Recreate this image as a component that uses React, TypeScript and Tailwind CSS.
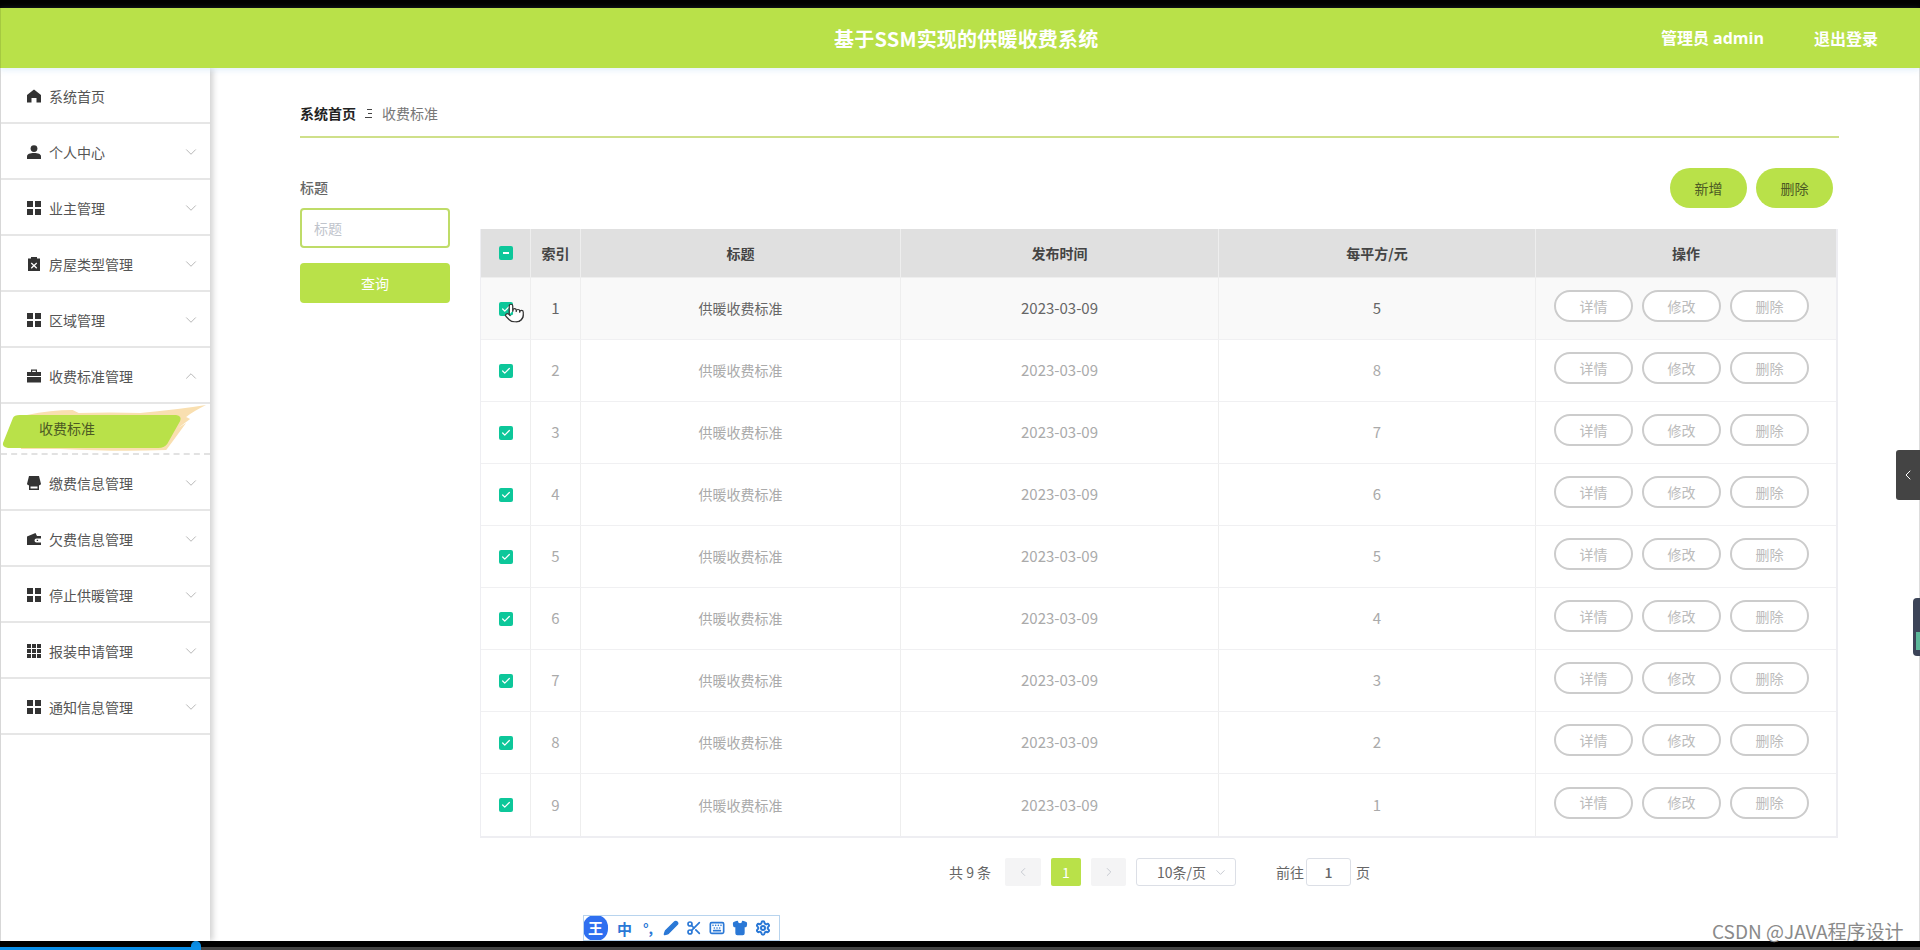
import { ChevronDown, ChevronUp, ChevronLeft, ChevronRight, Check, Pointer, Pen, Scissors, Keyboard, Shirt, Settings } from 'lucide-react'

type IconName = 'home' | 'user' | 'grid' | 'clip' | 'case' | 'store' | 'wallet' | 'grid9'

const MenuIcon = ({ name }: { name: IconName }) => {
  const cls = 'w-[14px] h-[14px] fill-[#333333] shrink-0'
  if (name === 'home') return <svg viewBox="0 0 14 14" className={cls}><path d="M7 0.5 14 6v7.5H9.5V9h-5v4.5H0V6z" /></svg>
  if (name === 'user') return <svg viewBox="0 0 14 14" className={cls}><circle cx="7" cy="3.6" r="3.4" /><path d="M0 14v-2.6C0 9.2 3 8 7 8s7 1.2 7 3.4V14z" /></svg>
  if (name === 'grid') return <svg viewBox="0 0 14 14" className={cls}><path d="M0 0h6v6H0zM8 0h6v6H8zM0 8h6v6H0zM8 8h6v6H8z" /></svg>
  if (name === 'clip') return <svg viewBox="0 0 14 14" className={cls}><path fillRule="evenodd" d="M1 1.500h3V0h6v1.500h3V14H1zM4.700 5.500 3.800 6.400 6 8.600l-2.200 2.200.9.900L7 9.500l2.300 2.200.9-.9L8 8.600l2.200-2.200-.9-.9L7 7.700z" /></svg>
  if (name === 'case') return <svg viewBox="0 0 14 14" className={cls}><path fillRule="evenodd" d="M4 3V0.500h6V3h4v4H0V3zM5.200 1.700V3h3.600V1.700zM0 8h14v5.500H0z" /></svg>
  if (name === 'store') return <svg viewBox="0 0 14 14" className={cls}><path fillRule="evenodd" d="M2 0h10l2 8q-1 1.500-2 1.200V14H2V9.200Q1 9.500 0 8zM3.500 10.500V12.500h7v-2z" /></svg>
  if (name === 'wallet') return <svg viewBox="0 0 14 14" className={cls}><path fillRule="evenodd" d="M0 4.500 8.500 1 10 4h4v2.500H9.500a2 2 0 0 0 0 4H14V13H0zM9.700 7.700h1.400v1.400H9.700z" /></svg>
  return <svg viewBox="0 0 14 14" className={cls}><path d="M0 0h4v4H0zM5 0h4v4H5zM10 0h4v4h-4zM0 5h4v4H0zM5 5h4v4H5zM10 5h4v4h-4zM0 10h4v4H0zM5 10h4v4H5zM10 10h4v4h-4z" /></svg>
}

const menus: { name: string; icon: IconName; arrow?: 'down' | 'up' }[] = [
  { name: '系统首页', icon: 'home' },
  { name: '个人中心', icon: 'user', arrow: 'down' },
  { name: '业主管理', icon: 'grid', arrow: 'down' },
  { name: '房屋类型管理', icon: 'clip', arrow: 'down' },
  { name: '区域管理', icon: 'grid', arrow: 'down' },
  { name: '收费标准管理', icon: 'case', arrow: 'up' },
]

const menusAfter: { name: string; icon: IconName; arrow?: 'down' | 'up' }[] = [
  { name: '缴费信息管理', icon: 'store', arrow: 'down' },
  { name: '欠费信息管理', icon: 'wallet', arrow: 'down' },
  { name: '停止供暖管理', icon: 'grid', arrow: 'down' },
  { name: '报装申请管理', icon: 'grid9', arrow: 'down' },
  { name: '通知信息管理', icon: 'grid', arrow: 'down' },
]

const rows = [
  { id: 1, price: 5 },
  { id: 2, price: 8 },
  { id: 3, price: 7 },
  { id: 4, price: 6 },
  { id: 5, price: 5 },
  { id: 6, price: 4 },
  { id: 7, price: 3 },
  { id: 8, price: 2 },
  { id: 9, price: 1 },
]

const MenuRow = ({ name, icon, arrow }: { name: string; icon: IconName; arrow?: 'down' | 'up' }) => (
  <div className="h-[56px] flex items-center pt-[2px] pl-[26px] pr-[10px] border-b-2 border-[#e6e6e6] text-[14px] text-[#555555]">
    <MenuIcon name={icon} />
    <span className="ml-[8px] flex-1">{name}</span>
    {arrow === 'down' && <ChevronDown className="w-[18px] h-[18px] text-[#b0b0b0]" strokeWidth={1.2} />}
    {arrow === 'up' && <ChevronUp className="w-[18px] h-[18px] text-[#b0b0b0]" strokeWidth={1.2} />}
  </div>
)

const OpButton = ({ label }: { label: string }) => (
  <button className="w-[79px] h-[32px] rounded-full border-2 border-[#cccccc] bg-white text-[14px] text-[#bbbbbb] flex items-center justify-center">
    {label}
  </button>
)

export default function App() {
  return (
    <div className="relative w-[1920px] h-[950px] overflow-hidden bg-white flex flex-col font-['Noto_Sans_CJK_SC','Noto_Sans',sans-serif]">
      <div className="h-[8px] bg-black shrink-0" />

      <header className="h-[60px] shrink-0 bg-[#b9e149] border-l border-[#a5c940] relative flex items-center justify-end pr-[42px] text-white font-bold shadow-[0_2px_6px_rgba(170,210,240,0.35)] z-10">
        <div className="absolute left-[833px] top-[16px] text-[20px] leading-[30px] tracking-[0.2px]">基于SSM实现的供暖收费系统</div>
        <span className="text-[16px] leading-[24px] font-['Open_Sans','Noto_Sans_CJK_SC',sans-serif]">管理员 admin</span>
        <span className="text-[16px] leading-[24px] ml-[50px]">退出登录</span>
      </header>

      <div className="flex-1 flex min-h-0 border-r border-l border-[#dddddd]">
        <aside className="w-[209px] shrink-0 bg-white shadow-[3px_0_6px_rgba(0,0,0,0.18)] z-[5]">
          {menus.map((m) => (
            <MenuRow key={m.name} {...m} />
          ))}
          <div className="relative h-[51px] border-b-2 border-dashed border-[#e2e2e2] flex items-center pl-[38px] text-[14px] text-[#4c5a24]">
            <svg viewBox="0 0 210 51" className="absolute left-0 top-0 w-[209px] h-[51px]">
              <path d="M26 11 Q50 6 72 6 L78 9 Q110 8 140 9 Q175 6 206 1 Q192 8 186 13 L190 15 L178 24 L186 19 L172 38 L166 46 Q120 48 60 45 L20 45 Z" fill="#f9dfb0" />
              <path d="M12 14 Q13 11 19 11 L176 11 Q182 12 180 17 L167 40 Q164 44 158 44 L7 44 Q1 43 2 39 Z" fill="#b9e149" />
            </svg>
            <span className="relative">收费标准</span>
          </div>
          {menusAfter.map((m) => (
            <MenuRow key={m.name} {...m} />
          ))}
        </aside>

        <main className="flex-1 min-w-0 pl-[90px] pr-[80px]">
          <div className="h-[70px] border-b-2 border-[#cfe08a] flex items-center pt-[23px] text-[14px]">
            <span className="font-bold text-[#222222]">系统首页</span>
            <span className="ml-[9px] flex flex-col gap-[3px] w-[7px]">
              <i className="block h-px w-[5px] bg-[#444444] ml-[2px]" />
              <i className="block h-px w-[4px] bg-[#444444] ml-[3px]" />
              <i className="block h-px w-[7px] bg-[#444444]" />
            </span>
            <span className="ml-[10px] text-[#777777]">收费标准</span>
          </div>

          <div className="flex gap-[30px]">
            <div className="w-[150px] shrink-0 pt-[39px]">
              <div className="h-[20px] leading-[20px] text-[14px] font-medium text-[#666666]">标题</div>
              <input
                placeholder="标题"
                className="mt-[11px] w-full h-[40px] px-[12px] border-2 border-[#bfdc68] rounded-[4px] text-[14px] outline-none placeholder:text-[#c0c4cc]"
              />
              <button className="mt-[15px] w-full h-[40px] rounded-[4px] bg-[#b9e149] text-white text-[14px]">查询</button>
            </div>

            <div className="flex-1 min-w-0 pt-[30px]">
              <div className="h-[40px] flex justify-end gap-[9px] pr-[6px]">
                <button className="w-[77px] h-[40px] rounded-full bg-[#b9e149] text-[14px] text-[#4c5a24]">新增</button>
                <button className="w-[77px] h-[40px] rounded-full bg-[#b9e149] text-[14px] text-[#4c5a24]">删除</button>
              </div>

              <div className="mt-[21px] w-[1358px] border-r-2 border-b-2 border-l border-[#eeeef2] text-[14px]">
                <div className="h-[49px] flex bg-[#e0e0e0] text-[#444444] font-bold border-b border-[#eeeeee]">
                  <div className="w-[50px] flex items-center justify-center border-r border-[#eeeeee]">
                    <span className="w-[14px] h-[14px] rounded-[2px] bg-[#0dc79a] flex items-center justify-center">
                      <i className="block w-[6px] h-[2px] bg-white" />
                    </span>
                  </div>
                  <div className="w-[50px] flex items-center justify-center border-r border-[#eeeeee]">索引</div>
                  <div className="w-[320px] flex items-center justify-center border-r border-[#eeeeee]">标题</div>
                  <div className="w-[318px] flex items-center justify-center border-r border-[#eeeeee]">发布时间</div>
                  <div className="w-[317px] flex items-center justify-center border-r border-[#eeeeee]">每平方/元</div>
                  <div className="flex-1 flex items-center justify-center">操作</div>
                </div>
                {rows.map((r) => (
                  <div
                    key={r.id}
                    className={`h-[62px] flex border-b border-[#f0f0f2] last:border-b-0 ${r.id === 1 ? 'bg-[#f9f9f9] text-[#666666]' : 'bg-white text-[#aaaaaa]'}`}
                  >
                    <div className="w-[50px] flex items-center justify-center border-r border-[#eeeeee] relative">
                      <span className="w-[14px] h-[14px] rounded-[2px] bg-[#0dc79a] flex items-center justify-center">
                        <Check className="w-[10px] h-[10px] text-white" strokeWidth={3} />
                      </span>
                      {r.id === 1 && (
                        <Pointer className="absolute left-[23px] top-[22px] w-[21px] h-[26px] fill-white text-[#333333]" strokeWidth={1.4} />
                      )}
                    </div>
                    <div className="w-[50px] flex items-center justify-center border-r border-[#eeeeee] text-[15px]">{r.id}</div>
                    <div className="w-[320px] flex items-center justify-center border-r border-[#eeeeee]">供暖收费标准</div>
                    <div className="w-[318px] flex items-center justify-center border-r border-[#eeeeee] text-[15px]">2023-03-09</div>
                    <div className="w-[317px] flex items-center justify-center border-r border-[#eeeeee] text-[15px]">{r.price}</div>
                    <div className="flex-1 flex items-center gap-[9px] pl-[18px] pb-[5px]">
                      <OpButton label="详情" />
                      <OpButton label="修改" />
                      <OpButton label="删除" />
                    </div>
                  </div>
                ))}
              </div>

              <div className="mt-[20px] h-[28px] flex items-center pl-[469px] text-[14px] text-[#666666]">
                <span className="w-[41px] whitespace-nowrap">共 9 条</span>
                <span className="ml-[15px] w-[36px] h-[28px] rounded-[2px] bg-[#f4f4f5] flex items-center justify-center text-[#c0c4cc]">
                  <ChevronLeft className="w-[14px] h-[14px]" strokeWidth={1.5} />
                </span>
                <span className="ml-[10px] w-[30px] h-[28px] rounded-[2px] bg-[#b9e149] flex items-center justify-center text-white">1</span>
                <span className="ml-[10px] w-[35px] h-[28px] rounded-[2px] bg-[#f4f4f5] flex items-center justify-center text-[#c0c4cc]">
                  <ChevronRight className="w-[14px] h-[14px]" strokeWidth={1.5} />
                </span>
                <span className="ml-[10px] w-[100px] h-[28px] rounded-[3px] border border-[#dcdfe6] flex items-center pl-[20px] pr-[7px]">
                  <span className="flex-1 whitespace-nowrap">10条/页</span>
                  <ChevronDown className="w-[15px] h-[15px] text-[#c0c4cc]" strokeWidth={1.4} />
                </span>
                <span className="ml-[40px] w-[30px] whitespace-nowrap">前往</span>
                <span className="w-[45px] h-[28px] rounded-[3px] border border-[#dcdfe6] flex items-center justify-center font-medium">1</span>
                <span className="ml-[5px]">页</span>
              </div>
            </div>
          </div>
        </main>
      </div>

      <div className="h-[6px] bg-black shrink-0" />
      <div className="h-[3px] shrink-0 bg-[#444444] flex">
        <div className="w-[196px] bg-[#0a8fe8]" />
      </div>
      <div className="absolute left-[191px] top-[941px] w-[10px] h-[9px] rounded-t-full bg-[#0a8fe8]" />

      {/* floating bits over the page */}
      <div className="absolute right-0 top-[450px] w-[24px] h-[50px] rounded-l-[3px] bg-[#444444] flex items-center justify-center">
        <ChevronLeft className="w-[16px] h-[16px] text-white" strokeWidth={1.5} />
      </div>
      <div className="absolute right-0 top-[598px] w-[7px] h-[58px] rounded-l-[4px] bg-[#3c4458] flex items-end">
        <i className="block w-full h-[18px] ml-[3px] mb-[6px] bg-[#5cb89a]" />
      </div>

      <div className="absolute left-[583px] top-[915px] h-[26px] w-[197px] border border-[#b8d4ee] bg-white overflow-hidden flex items-center text-[#2a78d6]">
        <span className="w-[25px] h-[26px] -ml-px rounded-[12px] bg-[#2f6ff0] text-white text-[15px] font-bold flex items-center justify-center shrink-0">王</span>
        <span className="ml-[9px] w-[16px] text-[15px] font-bold leading-none">中</span>
        <span className="ml-[7px] w-[16px] text-[14px] font-bold leading-none text-center">°,</span>
        <Pen className="ml-[7px] w-[16px] h-[16px] fill-[#2a78d6]" strokeWidth={2} />
        <Scissors className="ml-[7px] w-[16px] h-[16px]" strokeWidth={2.5} />
        <Keyboard className="ml-[7px] w-[16px] h-[16px]" strokeWidth={2.5} />
        <Shirt className="ml-[7px] w-[16px] h-[16px] fill-[#2a78d6]" strokeWidth={2} />
        <Settings className="ml-[7px] w-[16px] h-[16px]" strokeWidth={3} />
      </div>

      <div className="absolute left-[1712px] top-[919px] text-[19px] leading-[24px] text-[#8a8a8a] whitespace-nowrap">CSDN @JAVA程序设计</div>
    </div>
  )
}
